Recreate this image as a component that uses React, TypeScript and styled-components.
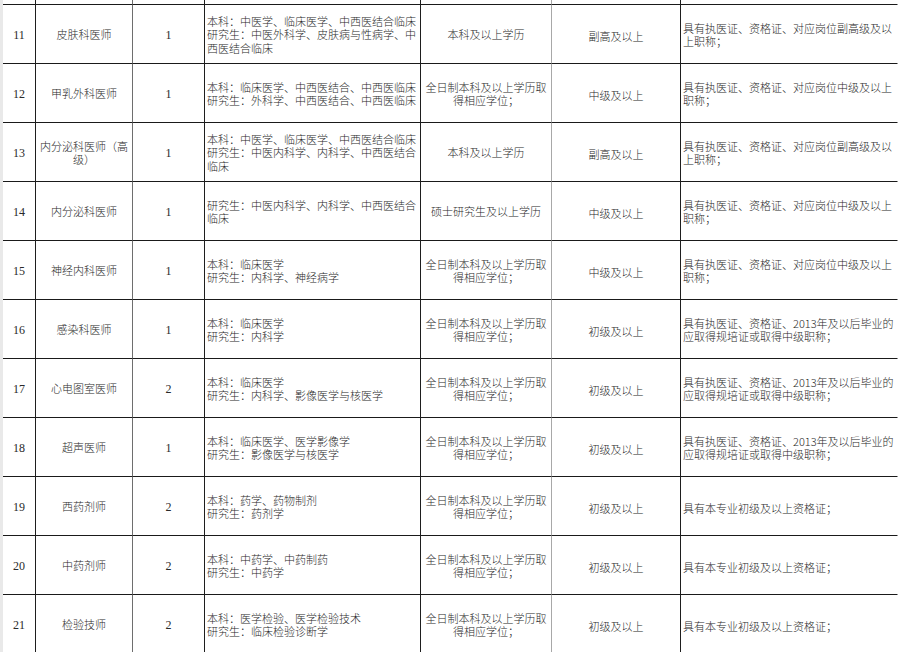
import styled, { createGlobalStyle } from 'styled-components';

const GlobalStyle = createGlobalStyle`
  html, body {
    margin: 0;
    padding: 0;
    background: #ffffff;
  }
  body {
    font-family: 'Liberation Serif', 'Noto Sans CJK SC', serif;
  }
`;

interface IPostRow {
  no: number;
  post: string[];
  count: number;
  major: string[];
  education: string[];
  title: string;
  require: string[];
}

const FULL_TIME = ['全日制本科及以上学历取', '得相应学位；'];
const REQ_2013 = ['具有执医证、资格证、2013年及以后毕业的', '应取得规培证或取得中级职称；'];
const REQ_BASIC = ['具有本专业初级及以上资格证；'];

const rows: IPostRow[] = [
  {
    no: 11,
    post: ['皮肤科医师'],
    count: 1,
    major: ['本科：中医学、临床医学、中西医结合临床', '研究生：中医外科学、皮肤病与性病学、中', '西医结合临床'],
    education: ['本科及以上学历'],
    title: '副高及以上',
    require: ['具有执医证、资格证、对应岗位副高级及以', '上职称；'],
  },
  {
    no: 12,
    post: ['甲乳外科医师'],
    count: 1,
    major: ['本科：临床医学、中西医结合、中西医临床', '研究生：外科学、中西医结合、中西医临床'],
    education: FULL_TIME,
    title: '中级及以上',
    require: ['具有执医证、资格证、对应岗位中级及以上', '职称；'],
  },
  {
    no: 13,
    post: ['内分泌科医师（高', '级）'],
    count: 1,
    major: ['本科：中医学、临床医学、中西医结合临床', '研究生：中医内科学、内科学、中西医结合', '临床'],
    education: ['本科及以上学历'],
    title: '副高及以上',
    require: ['具有执医证、资格证、对应岗位副高级及以', '上职称；'],
  },
  {
    no: 14,
    post: ['内分泌科医师'],
    count: 1,
    major: ['研究生：中医内科学、内科学、中西医结合', '临床'],
    education: ['硕士研究生及以上学历'],
    title: '中级及以上',
    require: ['具有执医证、资格证、对应岗位中级及以上', '职称；'],
  },
  {
    no: 15,
    post: ['神经内科医师'],
    count: 1,
    major: ['本科：临床医学', '研究生：内科学、神经病学'],
    education: FULL_TIME,
    title: '中级及以上',
    require: ['具有执医证、资格证、对应岗位中级及以上', '职称；'],
  },
  {
    no: 16,
    post: ['感染科医师'],
    count: 1,
    major: ['本科：临床医学', '研究生：内科学'],
    education: FULL_TIME,
    title: '初级及以上',
    require: REQ_2013,
  },
  {
    no: 17,
    post: ['心电图室医师'],
    count: 2,
    major: ['本科：临床医学', '研究生：内科学、影像医学与核医学'],
    education: FULL_TIME,
    title: '初级及以上',
    require: REQ_2013,
  },
  {
    no: 18,
    post: ['超声医师'],
    count: 1,
    major: ['本科：临床医学、医学影像学', '研究生：影像医学与核医学'],
    education: FULL_TIME,
    title: '初级及以上',
    require: REQ_2013,
  },
  {
    no: 19,
    post: ['西药剂师'],
    count: 2,
    major: ['本科：药学、药物制剂', '研究生：药剂学'],
    education: FULL_TIME,
    title: '初级及以上',
    require: REQ_BASIC,
  },
  {
    no: 20,
    post: ['中药剂师'],
    count: 2,
    major: ['本科：中药学、中药制药', '研究生：中药学'],
    education: FULL_TIME,
    title: '初级及以上',
    require: REQ_BASIC,
  },
  {
    no: 21,
    post: ['检验技师'],
    count: 2,
    major: ['本科：医学检验、医学检验技术', '研究生：临床检验诊断学'],
    education: FULL_TIME,
    title: '初级及以上',
    require: REQ_BASIC,
  },
];

// 列的右边框颜色：大部分是黑线，人数列前和学历列后是灰线
const lineColors = ['#1e1e1e', '#6e6e6e', '#1e1e1e', '#1e1e1e', '#a8a8a8', '#1e1e1e', 'transparent'];

const App = () => {
  return (
    <Page>
      <GlobalStyle />
      <Sheet>
        {/* 上一行（第10行）的尾部 */}
        {lineColors.map((color, i) => (
          <Cell key={`stub-${i}`} $line={color} />
        ))}
        {rows.map(row => (
          <Row key={row.no} row={row} />
        ))}
      </Sheet>
    </Page>
  );
};

const Row = ({ row }: { row: IPostRow }) => (
  <>
    <Cell $line={lineColors[0]}>
      <Num>{row.no}</Num>
    </Cell>
    <Cell $line={lineColors[1]}>
      {row.post.map(line => (
        <Line key={line}>{line}</Line>
      ))}
    </Cell>
    <Cell $line={lineColors[2]}>
      <Num>{row.count}</Num>
    </Cell>
    <Cell $line={lineColors[3]} $align='left'>
      {row.major.map(line => (
        <Line key={line}>{line}</Line>
      ))}
    </Cell>
    <Cell $line={lineColors[4]}>
      {row.education.map(line => (
        <Line key={line}>{line}</Line>
      ))}
    </Cell>
    <Cell $line={lineColors[5]} $drop={6}>
      <Line>{row.title}</Line>
    </Cell>
    <Cell $line={lineColors[6]} $align='left' $drop={row.require.length === 1 ? 6 : 2}>
      {row.require.map(line => (
        <Line key={line}>{line}</Line>
      ))}
    </Cell>
  </>
);

const Page = styled.div`
  width: 898px;
  height: 652px;
  overflow: hidden;
  border-left: 3px solid #e9e9e9;
  box-sizing: border-box;
  background: #ffffff;
`;

const Sheet = styled.div`
  display: grid;
  grid-template-columns: 33px 97px 72px 216px 131px 129px 1fr;
  grid-template-rows: 5px;
  grid-auto-rows: 59px;
  color: #2a2a2a;
  font-size: 11px;
`;

const Cell = styled.div<{ $line: string; $align?: 'left' | 'center'; $drop?: number }>`
  box-sizing: border-box;
  min-height: 0;
  border-right: 1px solid ${({ $line }) => $line};
  border-bottom: 1px solid #1a1a1a;
  display: flex;
  flex-direction: column;
  justify-content: center;
  align-items: ${({ $align }) => ($align === 'left' ? 'flex-start' : 'center')};
  padding-top: ${({ $drop }) => ($drop ?? 2)}px;
  padding-left: ${({ $align }) => ($align === 'left' ? '2px' : '0')};
  overflow: hidden;
`;

const Line = styled.div`
  line-height: 13.5px;
  white-space: nowrap;
  font-family: 'Noto Sans CJK SC', 'Liberation Serif', sans-serif;
  font-weight: 300;
`;

const Num = styled.div`
  font-family: 'Liberation Serif', serif;
  font-size: 12px;
  line-height: 14px;
`;

export default App;
